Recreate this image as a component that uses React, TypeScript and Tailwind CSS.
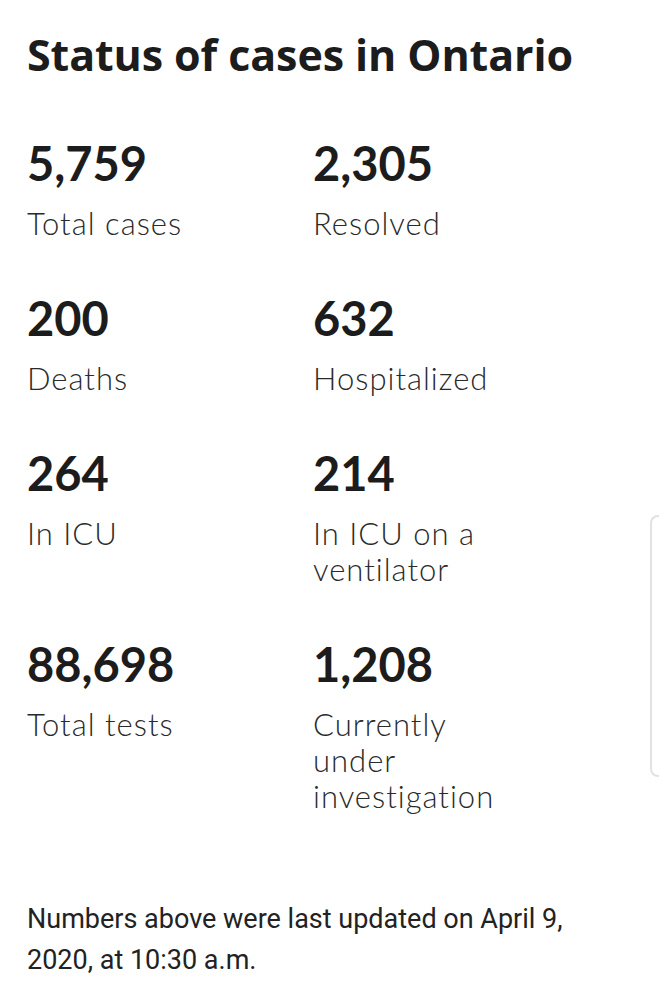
import React from "react";

// Case counts, as shown on the status page
const stats = [
  { value: "5,759", label: "Total cases" },
  { value: "2,305", label: "Resolved" },
  { value: "200", label: "Deaths" },
  { value: "632", label: "Hospitalized" },
  { value: "264", label: "In ICU" },
  { value: "214", label: "In ICU on a ventilator" },
  { value: "88,698", label: "Total tests" },
  { value: "1,208", label: "Currently under investigation" }
];

const rows = [stats.slice(0, 2), stats.slice(2, 4), stats.slice(4, 6), stats.slice(6, 8)];

const App: React.FC = () => {
  return (
    <div className="relative min-h-screen bg-white text-[#1c1c1c] overflow-hidden">
      {/* edge panel handle */}
      <div className="absolute right-0 top-[515px] h-[262px] w-[9px] rounded-l-[8px] border-2 border-r-0 border-[#e2e2e2]" />

      <main className="px-[27px] pt-[25px]">
        <h1 className="font-['Open_Sans',sans-serif] font-bold text-[43px] leading-[60px] tracking-[-0.1px]">
          Status of cases in Ontario
        </h1>

        <div className="mt-[54px] flex flex-col gap-[53px]">
          {rows.map((row, i) => (
            <div key={i} className="grid grid-cols-[286px_1fr]">
              {row.map((s) => (
                <div key={s.label} className="flex flex-col">
                  <div className="font-['Lato',sans-serif] font-bold text-[47px] leading-[48px]">
                    {s.value}
                  </div>
                  <div className="mt-[18px] w-[210px] font-['Lato',sans-serif] font-light text-[31px] leading-[36px] tracking-[1px] text-[#2a2a2a]">
                    {s.label}
                  </div>
                </div>
              ))}
            </div>
          ))}
        </div>

        <p className="mt-[85px] font-['Roboto',sans-serif] text-[27px] leading-[41px] text-[#222]">
          Numbers above were last updated on April 9, 2020, at 10:30 a.m.
        </p>
      </main>
    </div>
  );
};

export default App;
